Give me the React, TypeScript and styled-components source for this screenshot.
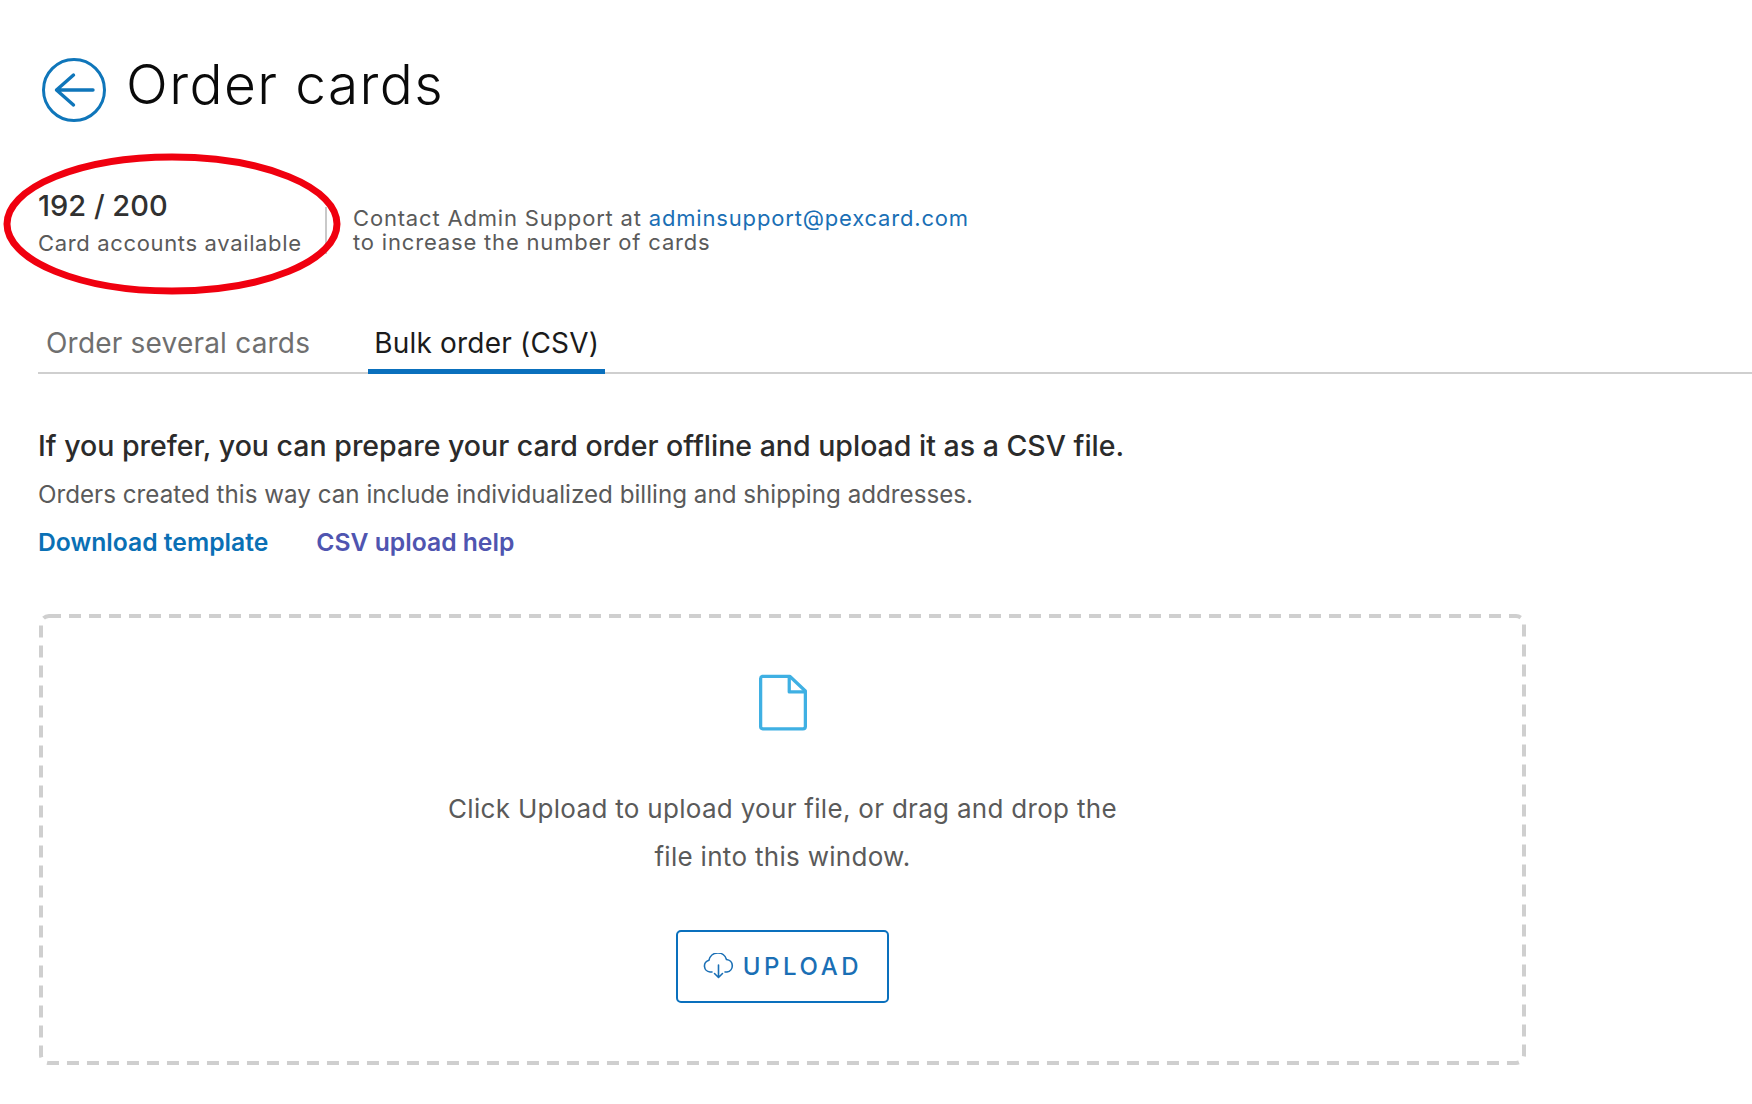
import React from "react";
import styled, { createGlobalStyle } from "styled-components";

const Global = createGlobalStyle`
  html, body { margin: 0; padding: 0; background: #fff; }
  body { font-family: "Inter", "Liberation Sans", sans-serif; overflow: hidden; }
`;

const dashedBox = encodeURIComponent(
  `<svg xmlns="http://www.w3.org/2000/svg" width="1487" height="451"><rect x="2" y="2" width="1483" height="447" rx="8" fill="none" stroke="#cfcfcf" stroke-width="4" stroke-dasharray="12 8"/></svg>`
);

const Page = styled.div`
  position: relative;
  width: 1752px;
  height: 1104px;
  padding: 47px 0 0 38px;
  box-sizing: border-box;
`;

const TitleRow = styled.header`
  display: flex;
  align-items: center;
  gap: 19px;
  margin-left: 4px;
  height: 74px;
`;

const BackIcon = styled.svg`
  width: 66px;
  height: 66px;
  flex: none;
  margin-top: 12px;
  margin-left: -1px;
`;

const Title = styled.h1`
  margin: 0;
  font-size: 55px;
  line-height: 70px;
  font-weight: 300;
  color: #0a0a0a;
  letter-spacing: 1.4px;
`;

const StatsRow = styled.section`
  display: flex;
  align-items: flex-end;
  margin-top: 66px;
  height: 70px;
`;

const Stat = styled.div`
  display: flex;
  width: 289px;
  height: 70px;
  justify-content: space-between;
`;

const StatText = styled.div`
  display: flex;
  flex-direction: column;
  padding-top: 2px;
`;

const Divider = styled.div`
  width: 2px;
  height: 47px;
  margin-top: 20px;
  background: #c9c9c9;
`;

const StatValue = styled.div`
  font-size: 29px;
  line-height: 34px;
  font-weight: 500;
  color: #313131;
`;

const StatLabel = styled.div`
  font-size: 22px;
  line-height: 24px;
  margin-top: 8px;
  color: #5a5a5a;
  letter-spacing: 0.65px;
  white-space: nowrap;
`;

const Contact = styled.div`
  margin-left: 26px;
  font-size: 22px;
  line-height: 24px;
  padding-bottom: 3px;
  color: #5a5a5a;
  letter-spacing: 0.82px;
`;

const ContactLink = styled.a`
  color: #1a6fb5;
`;

const Tabs = styled.nav`
  display: flex;
  margin-top: 61px;
  height: 56px;
  box-sizing: border-box;
  border-bottom: 2px solid #cfcfcf;
`;

const Tab = styled.div<{ $active?: boolean }>`
  height: 56px;
  box-sizing: border-box;
  padding: 0 ${(p) => (p.$active ? "6px" : "8px")};
  margin-right: ${(p) => (p.$active ? "0" : "50px")};
  font-size: 28px;
  line-height: 50px;
  letter-spacing: 0.2px;
  color: ${(p) => (p.$active ? "#1b1b1b" : "#6f6f6f")};
  border-bottom: ${(p) => (p.$active ? "5px solid #0a70bd" : "none")};
`;

const Heading = styled.h2`
  margin: 52px 0 0;
  font-size: 28.5px;
  line-height: 40px;
  font-weight: 500;
  color: #2b2b2b;
`;

const Sub = styled.p`
  margin: 11px 0 0;
  font-size: 24.2px;
  line-height: 36px;
  color: #5a5a5a;
`;

const Links = styled.div`
  display: flex;
  gap: 48px;
  margin-top: 11px;
  font-size: 24.7px;
  line-height: 36px;
  font-weight: 600;
`;

const TextLink = styled.a<{ $visited?: boolean }>`
  color: ${(p) => (p.$visited ? "#4f55b0" : "#0a70b5")};
`;

const DropZone = styled.section`
  width: 1487px;
  height: 451px;
  margin: 54px 0 0 1px;
  box-sizing: border-box;
  background: url("data:image/svg+xml,${dashedBox}") no-repeat;
  display: flex;
  flex-direction: column;
  align-items: center;
  padding-top: 60px;
`;

const DocIcon = styled.svg`
  width: 48px;
  height: 57px;
  display: block;
`;

const DropText = styled.p`
  margin: 54px 0 0;
  width: 680px;
  text-align: center;
  font-size: 26px;
  line-height: 48px;
  color: #5a5a5a;
  letter-spacing: 0.3px;
`;

const UploadButton = styled.button`
  display: flex;
  align-items: center;
  justify-content: center;
  gap: 9px;
  width: 213px;
  height: 73px;
  margin-top: 49px;
  background: #fff;
  border: 2px solid #0a70bd;
  border-radius: 5px;
  color: #1a6fb5;
  font-family: inherit;
  font-size: 24px;
  font-weight: 500;
  letter-spacing: 3.6px;
`;

const Ellipse = styled.svg`
  position: absolute;
  left: 0;
  top: 148px;
  width: 346px;
  height: 152px;
  pointer-events: none;
`;

export default function App() {
  return (
    <Page>
      <Global />
      <TitleRow>
        <BackIcon viewBox="0 0 66 66" fill="none" stroke="#0f76ba">
          <circle cx="33" cy="33" r="30.5" strokeWidth="3" />
          <path d="M52 33H15.5M32.5 18 15.5 33 32.5 48" strokeWidth="3.4" strokeLinecap="round" strokeLinejoin="round" />
        </BackIcon>
        <Title>Order cards</Title>
      </TitleRow>
      <StatsRow>
        <Stat>
          <StatText>
            <StatValue>192 / 200</StatValue>
            <StatLabel>Card accounts available</StatLabel>
          </StatText>
          <Divider />
        </Stat>
        <Contact>
          Contact Admin Support at <ContactLink>adminsupport@pexcard.com</ContactLink>
          <br />
          to increase the number of cards
        </Contact>
      </StatsRow>
      <Tabs>
        <Tab>Order several cards</Tab>
        <Tab $active>Bulk order (CSV)</Tab>
      </Tabs>
      <Heading>If you prefer, you can prepare your card order offline and upload it as a CSV file.</Heading>
      <Sub>Orders created this way can include individualized billing and shipping addresses.</Sub>
      <Links>
        <TextLink>Download template</TextLink>
        <TextLink $visited>CSV upload help</TextLink>
      </Links>
      <DropZone>
        <DocIcon viewBox="0 0 50 58" fill="none" stroke="#3fb0e3" strokeWidth="3.4" strokeLinejoin="round">
          <path d="M3.5 1.7H32L48.3 17V54a2.5 2.5 0 0 1-2.5 2.5H4A2.5 2.5 0 0 1 1.7 54V4a2.5 2.5 0 0 1 1.8-2.3Z" />
          <path d="M31.5 2V18H48" />
        </DocIcon>
        <DropText>Click Upload to upload your file, or drag and drop the file into this window.</DropText>
        <UploadButton>
          <svg width="31" height="28" viewBox="0 2 31 28" fill="none" stroke="#1a6fb5" strokeWidth="1.6" strokeLinecap="round" strokeLinejoin="round">
            <path d="M9 21H7a6 6 0 0 1-1-11.8A9 9 0 0 1 23.5 8.5 6.3 6.3 0 0 1 24 21h-2" />
            <path d="M15.5 14v12M11.5 22.5l4 4 4-4" />
          </svg>
          UPLOAD
        </UploadButton>
      </DropZone>
      <Ellipse viewBox="0 0 346 152" fill="none">
        <ellipse cx="172" cy="76" rx="165" ry="67" stroke="#f0000f" strokeWidth="7" />
      </Ellipse>
    </Page>
  );
}
